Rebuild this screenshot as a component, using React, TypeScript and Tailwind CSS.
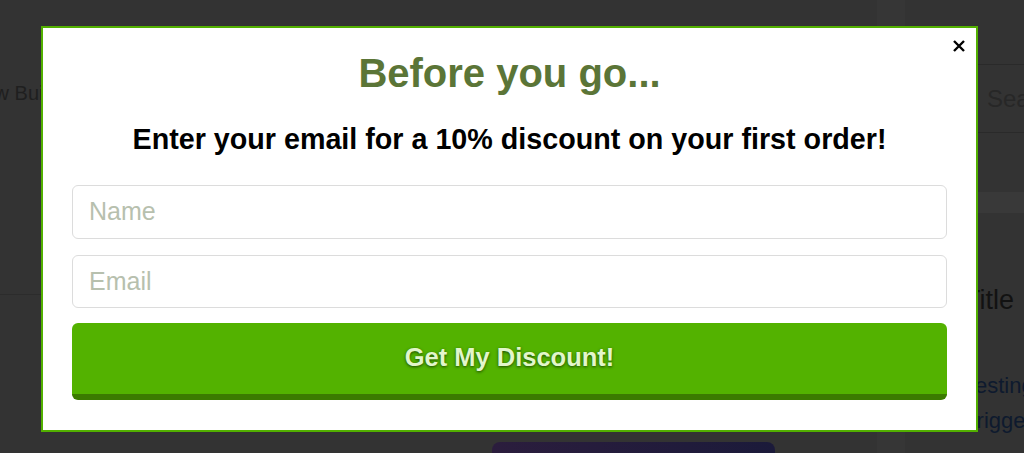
import { useState } from 'react'

export default function App() {
  const [name, setName] = useState('')
  const [email, setEmail] = useState('')

  return (
    <div className="relative flex h-[453px] w-[1024px] overflow-hidden bg-[#333333] font-['Liberation_Sans',Arial,sans-serif]">
      {/* page behind the overlay */}
      <div className="flex w-[877px] flex-col">
        <div className="h-[295px] border-b border-[#2c2c2c] pt-[81px]">
          <span className="ml-[-31px] text-[20px] leading-6 text-[#1f1f1f]">New Builder</span>
        </div>
        <div className="mt-auto ml-[492px] h-[11px] w-[283px] rounded-t-lg bg-gradient-to-r from-[#2b1d3d] to-[#1b1a3a]" />
      </div>
      <div className="w-[28px] bg-[#363636]" />
      <div className="flex w-[119px] flex-col">
        <div className="h-[65px] border-b border-[#2a2a2a]" />
        <div className="flex h-[68px] items-center border-b border-[#2a2a2a] pl-[82px] text-[24px] text-[#272727]">
          Search
        </div>
        <div className="mt-[59px] h-[21px] bg-[#393939]" />
        <div className="mt-[72px] pl-[59px] text-[27px] leading-[30px] text-[#121212]">Title</div>
        <div className="mt-[58px] flex flex-col gap-[9px] pl-[59px] text-[22px] leading-[26px] text-[#0e1a2e]">
          <span>Testing</span>
          <span>Trigger</span>
        </div>
      </div>

      {/* exit popup */}
      <div className="absolute left-[41px] top-[26px] flex h-[406px] w-[937px] flex-col border-2 border-[#52b000] bg-white px-[29px] pt-[25px]">
        <button className="absolute right-[11px] top-[12px]" aria-label="Close">
          <svg width="12" height="12" viewBox="0 0 12 12">
            <path d="M1 1L11 11M11 1L1 11" stroke="#000" strokeWidth="2.4" />
          </svg>
        </button>
        <h2 className="text-center text-[40px] font-bold leading-none text-[#5b7537]">Before you go...</h2>
        <p className="mt-[32px] text-center text-[28.7px] font-bold leading-none text-black">
          Enter your email for a 10% discount on your first order!
        </p>
        <input
          autoFocus
          value={name}
          onChange={(e) => setName(e.target.value)}
          placeholder="Name"
          className="mt-[31px] h-[54px] w-full rounded-md border border-[#dcdcdc] px-4 text-[25px] text-[#333] caret-[#5b7537] outline-none placeholder:text-[#b7c0ae]"
        />
        <input
          value={email}
          onChange={(e) => setEmail(e.target.value)}
          placeholder="Email"
          className="mt-4 h-[53px] w-full rounded-md border border-[#dcdcdc] px-4 text-[25px] text-[#333] outline-none placeholder:text-[#b7c0ae]"
        />
        <button className="mt-[15px] h-[77px] w-full rounded-md border-b-[6px] border-[#3b7a00] bg-[#53b200] pb-[2px] text-[25.5px] font-bold text-[#e2f6cb] [text-shadow:0_1px_3px_rgba(20,60,0,0.9)]">
          Get My Discount!
        </button>
      </div>
    </div>
  )
}
